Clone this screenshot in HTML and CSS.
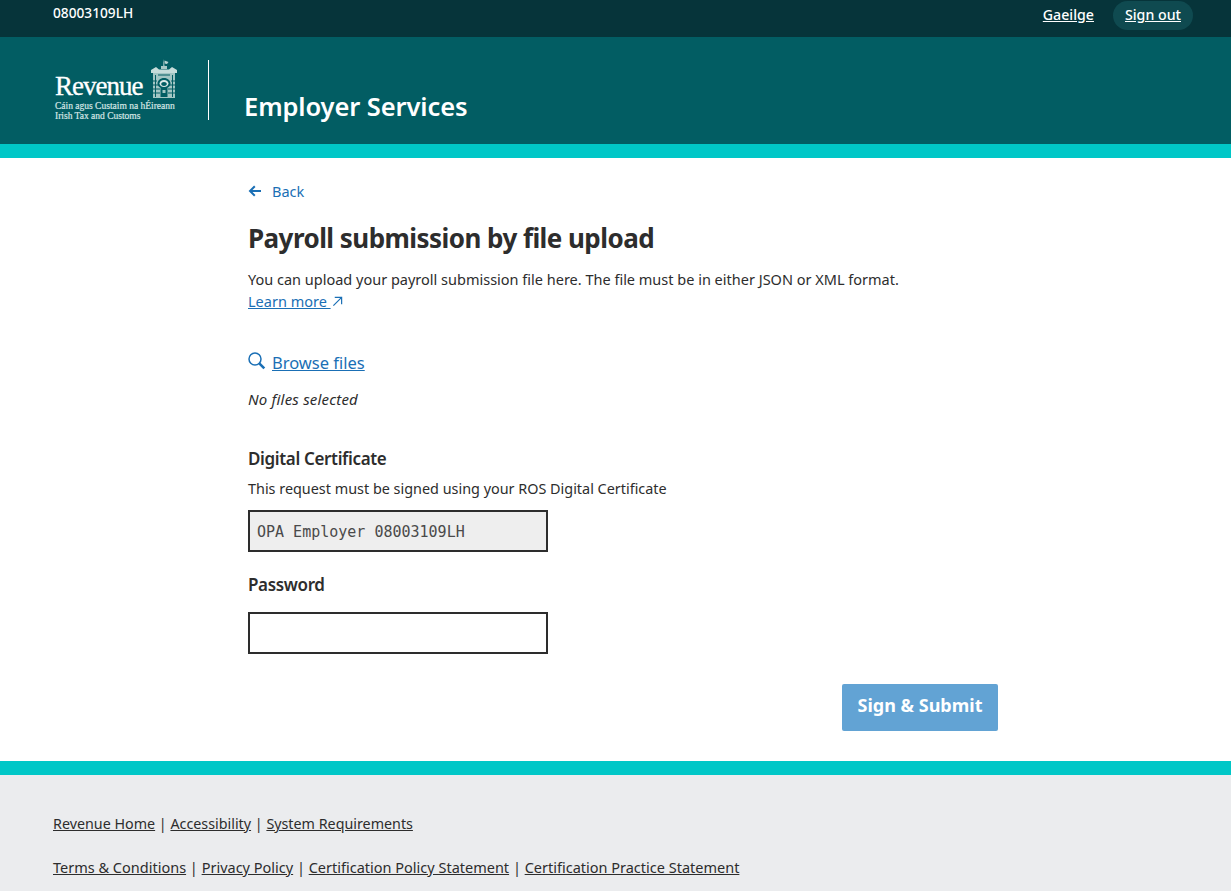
FILE: index.html
```html
<!DOCTYPE html>
<html lang="en">
<head>
<meta charset="utf-8">
<title>Employer Services</title>
<link rel="stylesheet" href="styles.css">
</head>
<body>
<div class="topbar">
  <span class="agent">08003109LH</span>
  <nav class="toplinks">
    <a href="#" class="toplink">Gaeilge</a>
    <a href="#" class="toplink pill">Sign out</a>
  </nav>
</div>
<header class="masthead">
  <div class="logo">
    <div class="logo-top">
      <span class="logo-word">Revenue</span>
      <svg class="castle" width="26" height="40" viewBox="0 0 26 40" aria-hidden="true">
        <path d="M12.500 0l1 7h-1.200zM13.500 1.500l4 1.500-1.500 2-2.500-.5z" fill="#b9d4d2"/>
        <path d="M10 7h6v3h-6z" fill="#a9c9c7"/>
        <path d="M0 11l5-3 3 2.500h10L21 8l5 3v3H0z" fill="#c6dcda"/>
        <path fill-rule="evenodd" d="M2 14h22v25H2zM13 19c-3.800 0-6.500 2.600-6.500 5.500 0 2 1.200 3.500 3 4.300V38h7v-9.200c1.800-.8 3-2.300 3-4.300 0-2.900-2.700-5.500-6.500-5.500z" fill="#a3c6c4"/>
        <path d="M13 21c-2.500 0-4.500 1.600-4.500 3.500S10.500 28 13 28s4.500-1.600 4.500-3.500S15.500 21 13 21z" fill="#dbe9e8"/>
        <path d="M13 23c-1.500 0-2.800.8-2.800 1.900s1.300 2 2.800 2 2.800-.9 2.800-2S14.500 23 13 23z" fill="#025d63"/>
        <path d="M4.500 16v22M21.500 16v22M2 22h4M2 26h5M2 30h7M2 34h7M17 30h7M17 34h7M19 26h5M20 22h4M7 16h12" stroke="#025d63" stroke-width="1" fill="none"/>
        <path d="M11.500 31h3v3h-3z" fill="#a3c6c4"/>
      </svg>
    </div>
    <div class="logo-line line-first">Cáin agus Custaim na hÉireann</div>
    <div class="logo-line">Irish Tax and Customs</div>
  </div>
  <div class="divider"></div>
  <div class="service">Employer Services</div>
</header>
<div class="strip"></div>
<main class="main">
  <a href="#" class="back">
    <svg width="14" height="12" viewBox="0 0 14 12" aria-hidden="true"><path d="M13 6H2.500M6.800 1.200L2 6l4.800 4.800" fill="none" stroke="#1a6fb5" stroke-width="2"/></svg>
    <span>Back</span>
  </a>
  <h1 class="title">Payroll submission by file upload</h1>
  <p class="intro">You can upload your payroll submission file here. The file must be in either JSON or XML format.<br>
    <a href="#" class="link">Learn more </a><svg class="ext" width="11" height="11" viewBox="0 0 12 12" aria-hidden="true"><path d="M1.500 10.500L10.500 1.500M3 1.500h7.500V9" fill="none" stroke="#1a6fb5" stroke-width="1.300"/></svg></p>
  <div class="browse">
    <svg class="search" width="18" height="18" viewBox="0 0 18 18" aria-hidden="true"><circle cx="7" cy="7" r="6" fill="none" stroke="#1a6fb5" stroke-width="1.500"/><path d="M11.300 11.300l5 5" stroke="#1a6fb5" stroke-width="2.600" fill="none"/></svg>
    <a href="#" class="link browse-link">Browse files</a>
  </div>
  <p class="nofiles">No files selected</p>
  <h2 class="label cert-label">Digital Certificate</h2>
  <p class="hint">This request must be signed using your ROS Digital Certificate</p>
  <div class="field readonly">OPA Employer 08003109LH</div>
  <h2 class="label pw-label">Password</h2>
  <div class="field"></div>
  <div class="actions"><button class="submit" type="button">Sign &amp; Submit</button></div>
</main>
<div class="strip"></div>
<footer class="footer">
  <p class="foot-row first"><a href="#">Revenue Home</a> | <a href="#">Accessibility</a> | <a href="#">System Requirements</a></p>
  <p class="foot-row"><a href="#">Terms &amp; Conditions</a> | <a href="#">Privacy Policy</a> | <a href="#">Certification Policy Statement</a> | <a href="#">Certification Practice Statement</a></p>
</footer>
</body>
</html>
```

FILE: styles.css
```css
* { box-sizing: border-box; }
html, body { margin: 0; padding: 0; }
body {
  font-family: "Noto Sans", "Open Sans", sans-serif;
  font-size: 14.500px;
  color: #2d2d2d;
  background: #fff;
  height: 891px;
  overflow: hidden;
}
.topbar {
  height: 37px;
  background: #06343a;
  color: #fff;
  display: flex;
  justify-content: space-between;
  padding: 0 38px 0 53px;
}
.agent { font-size: 13.700px; line-height: 26px; font-weight: 500; }
.toplinks { display: flex; align-items: flex-start; gap: 19px; padding-top: 1px; }
.toplink { color: #fff; font-size: 14.200px; line-height: 27px; padding-bottom: 2px; font-weight: 500; }
.pill { background: #0f4a50; border-radius: 15px; padding: 0 12px 2px; }
.masthead {
  height: 107px;
  background: #025d63;
  display: flex;
  padding-left: 55px;
  color: #fff;
}
.logo { width: 153px; padding-top: 22px; color: #fff; }
.logo-top { display: flex; align-items: flex-end; width: 122px; justify-content: space-between; height: 40px; }
.logo-word { font-family: "Liberation Serif", serif; font-size: 27px; line-height: 26px; letter-spacing: -1px; margin-bottom: 0; -webkit-text-stroke: 0.3px #fff; }
.logo-line { font-family: "Liberation Serif", serif; font-size: 9.500px; line-height: 10px; color: #d6e6e5; white-space: nowrap; -webkit-text-stroke: 0.2px #d6e6e5; }
.line-first { margin-top: 2px; }
.castle { display: block; margin-top: -1px; }
.divider { width: 1px; height: 60px; background: #fff; margin-top: 23px; }
.service { font-size: 25.500px; font-weight: 600; line-height: 34px; margin: 52px 0 0 35px; letter-spacing: -0.1px; }
.strip { height: 14px; background: #00c7c7; }
.main { height: 603px; padding: 24px 233px 0 248px; }
.back { display: flex; align-items: center; gap: 10px; color: #1a6fb5; text-decoration: none; font-size: 14.500px; line-height: 18px; }
.back svg { margin-top: -1px; }
.title { font-size: 26px; font-weight: 700; line-height: 36px; margin: 20px 0 0; letter-spacing: -0.55px; }
.intro { font-size: 14.500px; line-height: 22px; margin: 12px 0 0; }
.link { color: #1a6fb5; }
.ext { margin-left: 1px; vertical-align: 0; }
.browse { display: flex; align-items: center; gap: 6px; margin-top: 39px; height: 24px; }
.search { margin-top: -4px; }
.browse-link { font-size: 16.500px; line-height: 24px; }
.nofiles { font-size: 15px; font-style: italic; line-height: 20px; margin: 14px 0 0; letter-spacing: 0.2px; }
.label { font-size: 17px; font-weight: 600; line-height: 24px; margin: 0; letter-spacing: -0.35px; }
.cert-label { margin-top: 38px; }
.hint { font-size: 14.400px; line-height: 20px; margin: 8px 0 0; }
.field { width: 300px; height: 42px; border: 2px solid #2d2d2d; background: #fff; }
.readonly {
  background: #eeeeee;
  margin-top: 11px;
  font-family: "DejaVu Sans Mono", "Liberation Mono", monospace;
  font-size: 15px;
  line-height: 40px;
  padding-left: 7px;
  color: #4a4a4a;
}
.pw-label { margin: 21px 0 15px; }
.actions { display: flex; justify-content: flex-end; margin-top: 30px; }
.submit {
  width: 156px;
  height: 47px;
  background: #62a3d4;
  color: #fff;
  border: 0;
  border-radius: 2px;
  font-family: inherit;
  font-size: 18px;
  font-weight: 700;
  padding: 0 0 6px;
}
.footer { height: 116px; background: #ebecee; padding: 39px 53px 0; font-size: 14.500px; }
.foot-row { margin: 0; line-height: 20px; }
.foot-row.first { margin-bottom: 24px; font-size: 14.300px; }
.foot-row + .foot-row { margin-top: -1px; }
.foot-row a { color: #2d2d2d; }
```
